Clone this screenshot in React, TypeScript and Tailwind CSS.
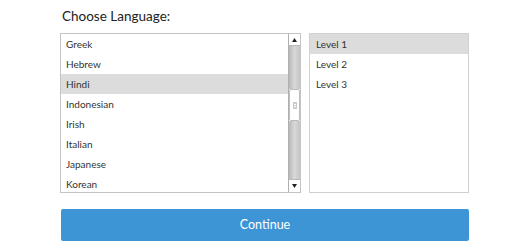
import React from "react";

const langs = ["Greek", "Hebrew", "Hindi", "Indonesian", "Irish", "Italian", "Japanese", "Korean"];
const levels = ["Level 1", "Level 2", "Level 3"];

export default function App() {
  return (
    <div className="w-[530px] h-[250px] bg-white pl-[60px] pt-[6px]" style={{ fontFamily: 'Lato, "Open Sans", sans-serif' }}>
      <div className="h-[20px] text-[13.5px] leading-[20px] text-[#222] pl-[2px]">Choose Language:</div>
      <div className="flex gap-[8px] mt-[7px]">
        <div className="w-[241px] h-[160px] border border-[#c4c4c4] flex">
          <div className="flex-1 flex flex-col pt-[0px]">
            {langs.map((l, i) => (
              <div
                key={l}
                className={`h-[20px] leading-[20px] pl-[5px] text-[10px] text-[#333] ${i === 2 ? "bg-[#dcdcdc]" : ""}`}
              >
                {l}
              </div>
            ))}
          </div>
          <div className="w-[12px] flex flex-col border-l border-[#b0b0b0]">
            <div className="h-[12px] bg-white flex items-center justify-center border-b border-[#bbb]">
              <svg width="5" height="4" viewBox="0 0 5 4"><path d="M2.5 0L5 4H0z" fill="#222" /></svg>
            </div>
            <div className="h-[43px] bg-gradient-to-r from-[#b9b9b9] via-[#d8d8d8] to-[#c6c6c6]" />
            <div className="h-[32px] bg-white border border-[#bdbdbd] rounded-[2px] flex items-center justify-center">
              <div className="w-[4px] h-[7px] border border-[#c8c8c8] bg-[repeating-linear-gradient(to_bottom,#d0d0d0_0px,#d0d0d0_1px,transparent_1px,transparent_2px)]" />
            </div>
            <div className="flex-1 bg-gradient-to-r from-[#b9b9b9] via-[#d8d8d8] to-[#c6c6c6]" />
            <div className="h-[13px] bg-white flex items-center justify-center border-t border-[#bbb]">
              <svg width="5" height="4" viewBox="0 0 5 4"><path d="M0 0H5L2.5 4z" fill="#222" /></svg>
            </div>
          </div>
        </div>
        <div className="w-[160px] h-[160px] border border-[#d0d0d0] flex flex-col">
          {levels.map((l, i) => (
            <div
              key={l}
              className={`h-[20px] leading-[20px] pl-[6px] text-[10px] text-[#333] ${i === 0 ? "bg-[#dcdcdc]" : ""}`}
            >
              {l}
            </div>
          ))}
        </div>
      </div>
      <button className="mt-[16px] ml-[1px] w-[408px] h-[32px] rounded-[2px] bg-[#3d95d5] text-white text-[12.5px] flex items-center justify-center">
        Continue
      </button>
    </div>
  );
}
